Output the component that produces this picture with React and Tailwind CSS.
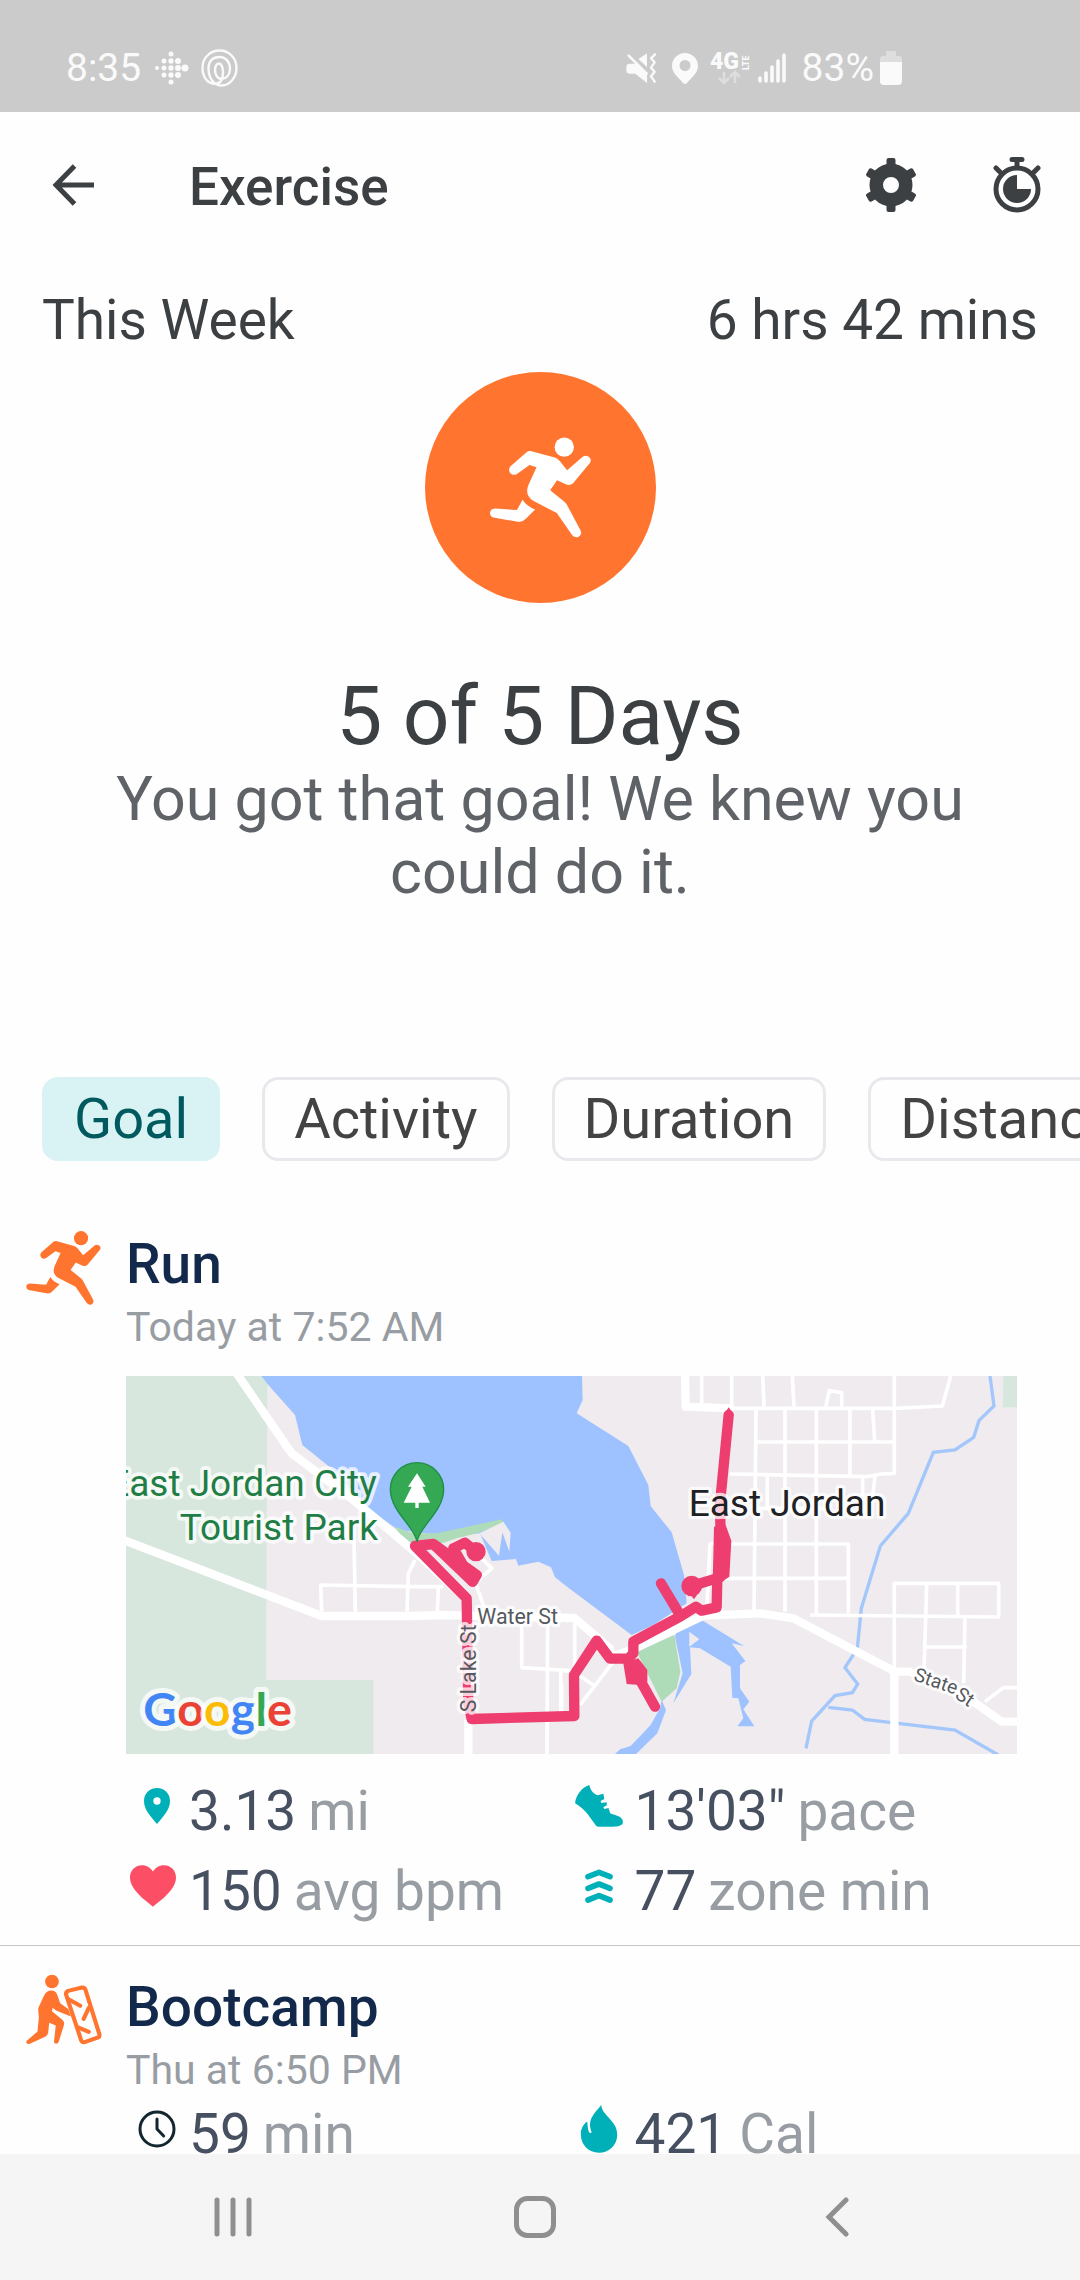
import { useState } from "react"

const filters = ["Goal", "Activity", "Duration", "Distance"]

const RunnerIcon = ({ className }) => (
  <svg className={className} viewBox="270 262 304 302" fill="currentColor" aria-hidden="true">
    <circle cx="493.5" cy="291.5" r="29" />
    <path d="M392 303L465 323Q472 325 480 333L502 361L550 320Q562 314 571 324Q576 332 570 340L520 400Q512 408 500 404L472 391L451 421L493 455Q499 460 502 466L543 543Q548 556 536 562Q524 565 517 556L471 490L400 453Q380 440 382 420Q383 412 386 405L410 352L389 345L350 373Q340 378 331 370Q324 360 331 350L380 307Q386 302 392 303Z" />
    <path d="M368 450Q380 470 406 479L377 508Q368 517 358 517L284 504Q270 502 270 489Q272 476 286 476L351 481Z" />
  </svg>
)

const BootcampIcon = ({ className }) => (
  <svg className={className} viewBox="75 641 228 212" aria-hidden="true">
    <g transform="scale(1.033 1)">
      <circle cx="148" cy="663" r="20" fill="currentColor" />
      <path
        fill="currentColor"
        d="M125 705Q132 690 146 690Q160 690 164 705L172 728L196 746L203 768L160 750L150 742L148 752L178 778Q185 784 183 793L168 843Q165 850 160 850Q154 850 154 843L159 795L140 787L137 817Q136 825 128 829L84 850Q77 852 73 846Q73 840 80 836L106 813L110 770L108 750Q108 740 112 734Z"
      />
      <g fill="none" stroke="currentColor" strokeWidth="12" strokeLinecap="round">
        <path d="M195 691L235 681Q242 680 245 687L286 822Q287 828 282 831L243 845Q236 847 233 840L189 702Q188 694 195 691Z" />
        <path d="M196 716L230 736M255 742L240 775M222 800L255 814" />
      </g>
    </g>
  </svg>
)

const PinIcon = () => (
  <svg className="ml-2 h-9 w-[26px]" viewBox="0 0 78 108" fill="#00b0b9" aria-hidden="true">
    <path fillRule="evenodd" d="M39 0C16 0 0 17 0 39C0 67 22 87 39 108C56 87 78 67 78 39C78 17 62 0 39 0ZM39 28a11 11 0 1 1 0 22a11 11 0 1 1 0-22Z" />
  </svg>
)

const HeartIcon = () => (
  <svg className="h-[42px] w-[46px]" viewBox="0 0 138 125" fill="#fc4e65" aria-hidden="true">
    <path d="M69 125C52 109 0 76 0 37C0 14 17 0 36 0C51 0 62 8 69 19C76 8 87 0 102 0C121 0 138 14 138 37C138 76 86 109 69 125Z" />
  </svg>
)

const ClockIcon = () => (
  <svg className="ml-2 size-[38px]" viewBox="0 0 114 114" fill="none" stroke="#12262f" strokeWidth="9" strokeLinecap="round" strokeLinejoin="round" aria-hidden="true">
    <circle cx="57" cy="57" r="51" />
    <path d="M57 27V57L77 78" />
  </svg>
)

const ShoeIcon = () => (
  <svg className="h-[42px] w-12" viewBox="102 77 144 126" fill="#00b0b9" aria-hidden="true">
    <path transform="scale(1.033 1)" d="M140 77C118 85 101 108 99 132C115 141 126 152 138 168L160 199Q162 202 168 202H210C225 202 238 198 238 188C237 172 222 170 201 162L196 146L184 149L181 144L191 138V129L175 131L173 125L184 119L181 103L165 108C152 103 145 95 140 77Z" />
  </svg>
)

const ZoneIcon = () => (
  <svg className="h-[34px] w-7" viewBox="0 0 84 102" fill="none" stroke="#00b0b9" strokeWidth="17" strokeLinecap="round" strokeLinejoin="round" aria-hidden="true">
    <path d="M9 23L42 10L75 23M9 58L42 45L75 58M9 93L42 80L75 93" />
  </svg>
)

const FlameIcon = () => (
  <svg className="h-12 w-[38px]" viewBox="118 1033 112 146" fill="#00b0b9" aria-hidden="true">
    <path transform="scale(1.033 1)" d="M175 1033C177 1053 190 1062 201 1076C215 1092 222 1103 222 1124C222 1155 198 1178 168 1178C138 1178 115 1155 115 1122C115 1105 122 1091 134 1083C135 1098 136 1108 139 1116Q143 1121 147 1116C140 1098 141 1085 146 1073C153 1058 164 1048 175 1033Z" />
  </svg>
)

function StatusBar() {
  return (
    <div className="flex h-28 shrink-0 items-center justify-between bg-[#cbcbcb] pt-6 pr-[178px] pl-[66px] text-[39px] leading-[46px] text-[#fafafa]">
      <div className="flex items-center">
        <span>8:35</span>
        <svg className="ml-3.5 size-[34px]" viewBox="0 0 34 34" fill="currentColor" aria-hidden="true">
          <circle cx="2" cy="17" r="2" />
          <circle cx="9" cy="10" r="2.5" />
          <circle cx="9" cy="17" r="2.5" />
          <circle cx="9" cy="24" r="2.5" />
          <circle cx="16" cy="3" r="2.5" />
          <circle cx="16" cy="10" r="2.7" />
          <circle cx="16" cy="17" r="2.7" />
          <circle cx="16" cy="24" r="2.7" />
          <circle cx="16" cy="31" r="2.5" />
          <circle cx="23" cy="10" r="3" />
          <circle cx="23" cy="17" r="3" />
          <circle cx="23" cy="24" r="3" />
          <circle cx="30" cy="17" r="3.5" />
        </svg>
        <svg className="ml-3 h-[38px] w-[37px]" viewBox="0 0 37 38" fill="none" stroke="currentColor" strokeWidth="2.4" aria-hidden="true">
          <path d="M16 34.500C7 36 1.500 28 1.500 19C1.500 9 9 1.500 18.500 1.500S35.500 9 35.500 19S28 36.500 21 36.500C12 36.500 7.500 28 7.500 19.500C7.500 12 12 8 18.500 8S29 13 29 20C29 26 25 30 20.500 30C16 30 14 25 14 20.500C14 17 16 14.500 18 14.500S22 18 22 23C22 29 20 34 16 34.500" />
        </svg>
      </div>
      <div className="flex items-center">
        <svg className="size-[30px]" viewBox="0 0 90 90" fill="currentColor" aria-hidden="true">
          <path d="M10 32Q1 32 1 42V52Q1 62 10 62H28L63 90V66L30 32ZM37 18L63 1V42Z" />
          <path d="M8 8L62 62" stroke="currentColor" strokeWidth="8" strokeLinecap="round" />
          <path d="M87 4L75 16L86 28L75 44L86 56L75 70L86 86" fill="none" stroke="currentColor" strokeWidth="7" strokeLinecap="round" strokeLinejoin="round" />
        </svg>
        <svg className="ml-4 h-[31px] w-[26px]" viewBox="0 0 26 31" fill="currentColor" aria-hidden="true">
          <path fillRule="evenodd" d="M13 0C6 0 0 5.500 0 13C0 20 7 25 11 30Q13 32 15 30C19 25 26 20 26 13C26 5.500 20 0 13 0ZM13 7a5.500 5.500 0 1 1 0 11a5.500 5.500 0 1 1 0-11Z" />
        </svg>
        <svg className="ml-3 h-8 w-10 overflow-visible" viewBox="0 0 40 32" fill="currentColor" aria-label="4G LTE">
          <text x="0" y="17" fontSize="23" fontWeight="900">4G</text>
          <text transform="translate(39 18) rotate(-90)" fontSize="9" fontWeight="700">LTE</text>
          <path d="M14 20V30M9 26L14 31L19 26M25 31V21M20 25L25 20L30 25" fill="none" stroke="#dedede" strokeWidth="2.600" />
        </svg>
        <svg className="ml-2 h-[30px] w-7" viewBox="0 0 28 30" stroke="currentColor" strokeWidth="3.6" strokeLinecap="round" aria-hidden="true">
          <path d="M2 25V28M8 20V28M14 14V28M20 8V28M26 2V28" />
        </svg>
        <span className="ml-4">83%</span>
        <svg className="ml-1.5 h-[34px] w-[22px]" viewBox="0 0 22 34" aria-hidden="true">
          <path d="M6 1Q6 0 7 0H15Q16 0 16 1V5H19Q22 5 22 8V12H0V8Q0 5 3 5H6Z" fill="#dedede" />
          <path d="M0 11H22V30Q22 34 18 34H4Q0 34 0 30Z" fill="currentColor" />
        </svg>
      </div>
    </div>
  )
}

function Header() {
  return (
    <header className="flex h-[150px] shrink-0 items-center pr-[21px] pl-[31px] text-[#3c4043]">
      <button type="button" aria-label="Back" className="flex h-[84px] w-[84px] items-center justify-center pb-1">
        <svg className="size-[42px]" viewBox="0 0 42 42" fill="none" stroke="currentColor" strokeWidth="5" aria-hidden="true">
          <path d="M22.500 2L4 21L22.500 40M4 21H42" />
        </svg>
      </button>
      <h1 className="ml-[74px] text-[53px] leading-[64px] font-medium">Exercise</h1>
      <div className="ml-auto flex gap-[42px]">
        <button type="button" aria-label="Settings" className="flex h-[84px] w-[84px] items-center justify-center pb-1">
          <svg className="h-[54px] w-[50px]" viewBox="0 0 50 54" fill="currentColor" aria-hidden="true">
            <path fillRule="evenodd" d="M25 5.500a21.500 21.500 0 1 1 0 43a21.500 21.500 0 1 1 0-43ZM25 19a8 8 0 1 0 0 16a8 8 0 1 0 0-16Z" />
            <path d="M20.500 8V2Q20.500 0 22.500 0H27.500Q29.500 0 29.500 2V8ZM20.500 46V52Q20.500 54 22.500 54H27.500Q29.500 54 29.500 52V46Z" />
            <path d="M20.500 8V2Q20.500 0 22.500 0H27.500Q29.500 0 29.500 2V8ZM20.500 46V52Q20.500 54 22.500 54H27.500Q29.500 54 29.500 52V46Z" transform="rotate(60 25 27)" />
            <path d="M20.500 8V2Q20.500 0 22.500 0H27.500Q29.500 0 29.500 2V8ZM20.500 46V52Q20.500 54 22.500 54H27.500Q29.500 54 29.500 52V46Z" transform="rotate(-60 25 27)" />
          </svg>
        </button>
        <button type="button" aria-label="Start timer" className="flex h-[84px] w-[84px] items-center justify-center pb-1">
          <svg className="h-14 w-12" viewBox="0 0 48 56" fill="none" stroke="currentColor" strokeWidth="5" strokeLinecap="round" aria-hidden="true">
            <circle cx="24" cy="32" r="21" />
            <path d="M19 2.500H29M24 3V10M3 11L8 16M45 11L40 16" />
            <path d="M24 18A14 14 0 1 0 38 32H24Z" fill="currentColor" stroke="none" />
          </svg>
        </button>
      </div>
    </header>
  )
}

function RouteMap() {
  return (
    <svg
      className="block w-full font-['Roboto',sans-serif]"
      viewBox="18 18 2673 1134"
      role="img"
      aria-label="Run route around East Jordan"
    >
      <rect x="18" y="18" width="2673" height="1134" fill="#efebef" />
      <path d="M18 18H442L438 930H760V1152H18ZM2650 18H2691V112H2648Z" fill="#d7e7dd" />

      {/* lake */}
      <path
        fill="#9dc2ff"
        d="M424 18L445 45L525 135L547 225L640 300L750 420L835 480L1000 500L1080 490L1115 573L1188 567L1195 587L1255 575L1293 592L1305 622L1350 657L1535 795L1600 765L1700 700L1692 615L1655 487L1592 408L1585 345L1525 228L1370 130L1388 90L1386 18Z"
      />
      <path d="M825 470L880 490H950L1145 448L1150 460L1070 490L1010 505L950 525H860Z" fill="#afdcb8" />
      <path d="M1078 490L1150 455L1172 488L1168 545L1147 487L1137 557Z" fill="#efebef" />

      <g transform="translate(1320 0)">
        {/* river arms and creeks */}
        <path d="M350 780L425 750L552 828L515 820L556 873L540 885V955L568 995L550 1018L583 1069H532L550 1045L535 985L517 983L512 890L420 835L390 832L394 912L340 1000L368 910L345 800Z" fill="#9dc2ff" />
        <path d="M388 785L418 808L388 830Z" fill="#efebef" />
        <path d="M305 990L318 1020L292 1090L228 1152H165L180 1138L212 1128L272 1065L300 1015Z" fill="#9dc2ff" />
        <path d="M230 845L343 795L361 905L350 955L305 995Z" fill="#afdcb8" />
        <path
          fill="none"
          stroke="#a3c7fb"
          strokeWidth="10"
          d="M1290 18L1302 108L1257 152L1241 202L1185 240L1120 247L1045 430L961 528L904 715L892 835L855 893L893 942L877 968L825 977L755 1053L738 1135M805 1012L877 1020L914 1048L1185 1080L1315 1155"
        />
      </g>

      {/* side streets */}
      <g fill="none" stroke="#fff" strokeWidth="11" strokeLinejoin="round">
        <path d="M702 510L706 730M605 725L602 645L870 650H970M885 570L865 610L861 725M955 650L952 725M1060 620L1095 720M1080 560L1115 595L1075 630M1205 740V893L1350 902M1283 740L1281 1152M1322 900V1040" />
        <g transform="translate(1320 0)">
          <path d="M425 18V110M515 18V110M608 18L612 110M697 18L702 112M1003 18V310L965 312L920 320L510 312M797 112L808 62L845 68V112M520 115L1003 115L1147 108L1172 18M588 120L582 725M675 120V725M769 120V735M870 120V320M938 120L944 212M585 216H1003M622 320V415M908 320V400M945 320L935 400M585 415H800M440 725L450 522H865V730M490 625H865M435 700L490 720" />
          <path d="M750 735L1320 741M1003 900V640H1316V741M1100 645L1092 905M1193 640V741M1215 741L1211 940M1095 831H1220M44 760V905M0 900L40 905L100 945M60 1005L160 875M5 940V1030M1275 995L1330 953H1371" />
        </g>
      </g>
      {/* main roads */}
      <g fill="none" stroke="#fff" strokeWidth="25" strokeLinejoin="round">
        <path d="M350 10L515 250L700 390L790 465L890 550L1040 690M10 510L605 738H870L960 735L1350 744L1363 744L1470 835L1475 860L1535 840L1750 737L1920 730L2020 745L2325 905H2370L2560 995L2645 1055H2700M1045 1050V1160M2323 900V1160M1695 10L1697 110L1840 115" />
      </g>

      {/* recorded track */}
      <g fill="none" stroke="#ee3d6f" strokeWidth="31" strokeLinejoin="round" strokeLinecap="round">
        <path d="M885 528L940 522L1070 615L1058 635L1000 535L1035 518L1068 545M885 528L1040 685L1045 1000L1055 1047L1363 1038L1362 915L1430 812L1470 866H1525L1540 850L1540 815L1680 740L1728 710L1745 722L1790 712L1792 625L1803 560L1800 400L1826 135" />
        <path d="M945 527L1058 635M1623 640L1680 735M1715 648L1800 622M1535 885L1605 1010" />
      </g>
      <g fill="#ee3d6f">
        <circle cx="1068" cy="545" r="29" />
        <circle cx="1715" cy="648" r="31" />
        <path d="M1700 660L1722 688L1745 655ZM1817 465L1834 512L1828 620L1810 632L1778 640L1782 470ZM1510 880L1555 865L1582 900V935L1560 945L1520 942ZM1826 112L1842 135H1811Z" />
      </g>

      {/* park marker */}
      <path d="M891 515C885 470 811 425 811 358A80 80 0 0 1 971 358C971 425 897 470 891 515Z" fill="#34a853" stroke="#1f8f45" strokeWidth="4" />
      <path d="M891 310L917 350H907L930 398H896V414H886V398H851L875 350H864Z" fill="#fff" />

      <g stroke="#fff" strokeOpacity="0.76" strokeLinejoin="round" style={{ paintOrder: "stroke" }}>
        <g fill="#1e7e45" fontSize="111" textAnchor="end" strokeWidth="22">
          <text x="770" y="378">East Jordan City</text>
          <text x="774" y="510">Tourist Park</text>
        </g>
        <text x="1706" y="438" fill="#202124" fontSize="111" strokeWidth="20">East Jordan</text>
        <g fill="#55595e" fontSize="64" strokeWidth="20">
          <text x="1072" y="763">Water St</text>
          <text transform="translate(1068 1027) rotate(-90)">S Lake St</text>
        </g>
        <g fill="#55595e" fontSize="58" strokeWidth="18">
          <text transform="translate(2378 930) rotate(19)">State</text>
          <text transform="translate(2502 982) rotate(34)">St</text>
        </g>
        <text x="70" y="1067" fontSize="140" fontWeight="700" strokeWidth="30" className="font-['Lato',sans-serif]">
          <tspan fill="#4285f4">G</tspan>
          <tspan fill="#ea4335">o</tspan>
          <tspan fill="#fbbc05">o</tspan>
          <tspan fill="#4285f4">g</tspan>
          <tspan fill="#34a853">l</tspan>
          <tspan fill="#ea4335">e</tspan>
        </text>
      </g>
    </svg>
  )
}

function Stat({ icon, value, unit }) {
  return (
    <li className="flex items-center text-[55px] leading-[80px] whitespace-nowrap">
      <span className="flex w-[54px] shrink-0 items-center justify-center pb-2.5">{icon}</span>
      <span className="ml-[9px] text-[#465060]">{value}</span>
      <span className="ml-3 text-[#989da3]">{unit}</span>
    </li>
  )
}

function Activity({ icon, title, time, map, stats }) {
  return (
    <article className="flex pr-[63px]">
      <div className="w-[126px] shrink-0 pt-7 pl-[26px] text-[#ff752f]">{icon}</div>
      <div className="min-w-0 flex-1 pt-[29px] pb-3.5">
        <h3 className="text-[55px] leading-[64px] font-medium text-[#13294b]">{title}</h3>
        <p className="mt-2 text-[41px] leading-[47px] text-[#989da3]">{time}</p>
        {map && <div className="mt-[25px] mb-[17px]">{map}</div>}
        <ul className="grid grid-cols-2">
          {stats.map((stat) => (
            <Stat key={stat.unit} {...stat} />
          ))}
        </ul>
      </div>
    </article>
  )
}

const activities = [
  {
    icon: <RunnerIcon className="h-[74px] w-[75px]" />,
    title: "Run",
    time: "Today at 7:52 AM",
    map: <RouteMap />,
    stats: [
      { icon: <PinIcon />, value: "3.13", unit: "mi" },
      { icon: <ShoeIcon />, value: "13'03\"", unit: "pace" },
      { icon: <HeartIcon />, value: "150", unit: "avg bpm" },
      { icon: <ZoneIcon />, value: "77", unit: "zone min" },
    ],
  },
  {
    icon: <BootcampIcon className="h-[71px] w-[76px]" />,
    title: "Bootcamp",
    time: "Thu at 6:50 PM",
    stats: [
      { icon: <ClockIcon />, value: "59", unit: "min" },
      { icon: <FlameIcon />, value: "421", unit: "Cal" },
    ],
  },
]

function NavBar() {
  return (
    <nav className="grid h-[126px] shrink-0 grid-cols-3 bg-[#f5f5f5] pr-[92px] pl-[82px] text-[#8f8f8f]">
      <button type="button" aria-label="Recent apps" className="flex items-center justify-center">
        <svg className="h-10 w-[38px]" viewBox="0 0 38 40" stroke="currentColor" strokeWidth="5" strokeLinecap="round">
          <path d="M3 3V37M19 3V37M35 3V37" />
        </svg>
      </button>
      <button type="button" aria-label="Home" className="flex items-center justify-center">
        <svg className="size-[42px]" viewBox="0 0 42 42" fill="none" stroke="currentColor" strokeWidth="5">
          <rect x="2.5" y="2.5" width="37" height="37" rx="11" />
        </svg>
      </button>
      <button type="button" aria-label="Back" className="flex items-center justify-center">
        <svg className="h-10 w-6" viewBox="0 0 24 40" fill="none" stroke="currentColor" strokeWidth="5" strokeLinecap="round">
          <path d="M21 3L4 20L21 37" />
        </svg>
      </button>
    </nav>
  )
}

export default function App() {
  const [active, setActive] = useState("Goal")

  return (
    <div className="flex h-screen flex-col overflow-hidden bg-[#fefefe] font-['Roboto',sans-serif]">
      <StatusBar />
      <Header />
      <main className="min-h-0 flex-1 overflow-x-hidden overflow-y-auto [scrollbar-width:none]">
        <section className="flex flex-col items-center px-[42px] text-[#3c4043]">
          <div className="flex w-full justify-between pt-[25px] text-[55px] leading-[66px]">
            <span>This Week</span>
            <span>6 hrs 42 mins</span>
          </div>
          <div className="mt-[19px] flex size-[231px] items-center justify-center rounded-full bg-[#ff752f] text-white">
            <RunnerIcon className="size-[101px]" />
          </div>
          <h2 className="mt-[66px] text-[82px] leading-[94px]">5 of 5 Days</h2>
          <p className="px-[60px] text-center text-[61px] leading-[73px] text-[#5f6368]">
            You got that goal! We knew you could do it.
          </p>
        </section>

        <div className="mt-[168px] flex gap-[42px] overflow-hidden pl-[42px]">
          {filters.map((filter) => (
            <button
              key={filter}
              type="button"
              onClick={() => setActive(filter)}
              className={`h-[84px] shrink-0 rounded-2xl border-3 px-[29px] text-[56px] leading-[64px] ${
                active === filter
                  ? "border-[#d9f3f4] bg-[#d9f3f4] text-[#00595e]"
                  : "border-[#e8e9ed] text-[#434343]"
              }`}
            >
              {filter}
            </button>
          ))}
        </div>

        <div className="mt-[42px] divide-y divide-[#c6c6c6]">
          {activities.map((activity) => (
            <Activity key={activity.title} {...activity} />
          ))}
        </div>
      </main>
      <NavBar />
    </div>
  )
}
